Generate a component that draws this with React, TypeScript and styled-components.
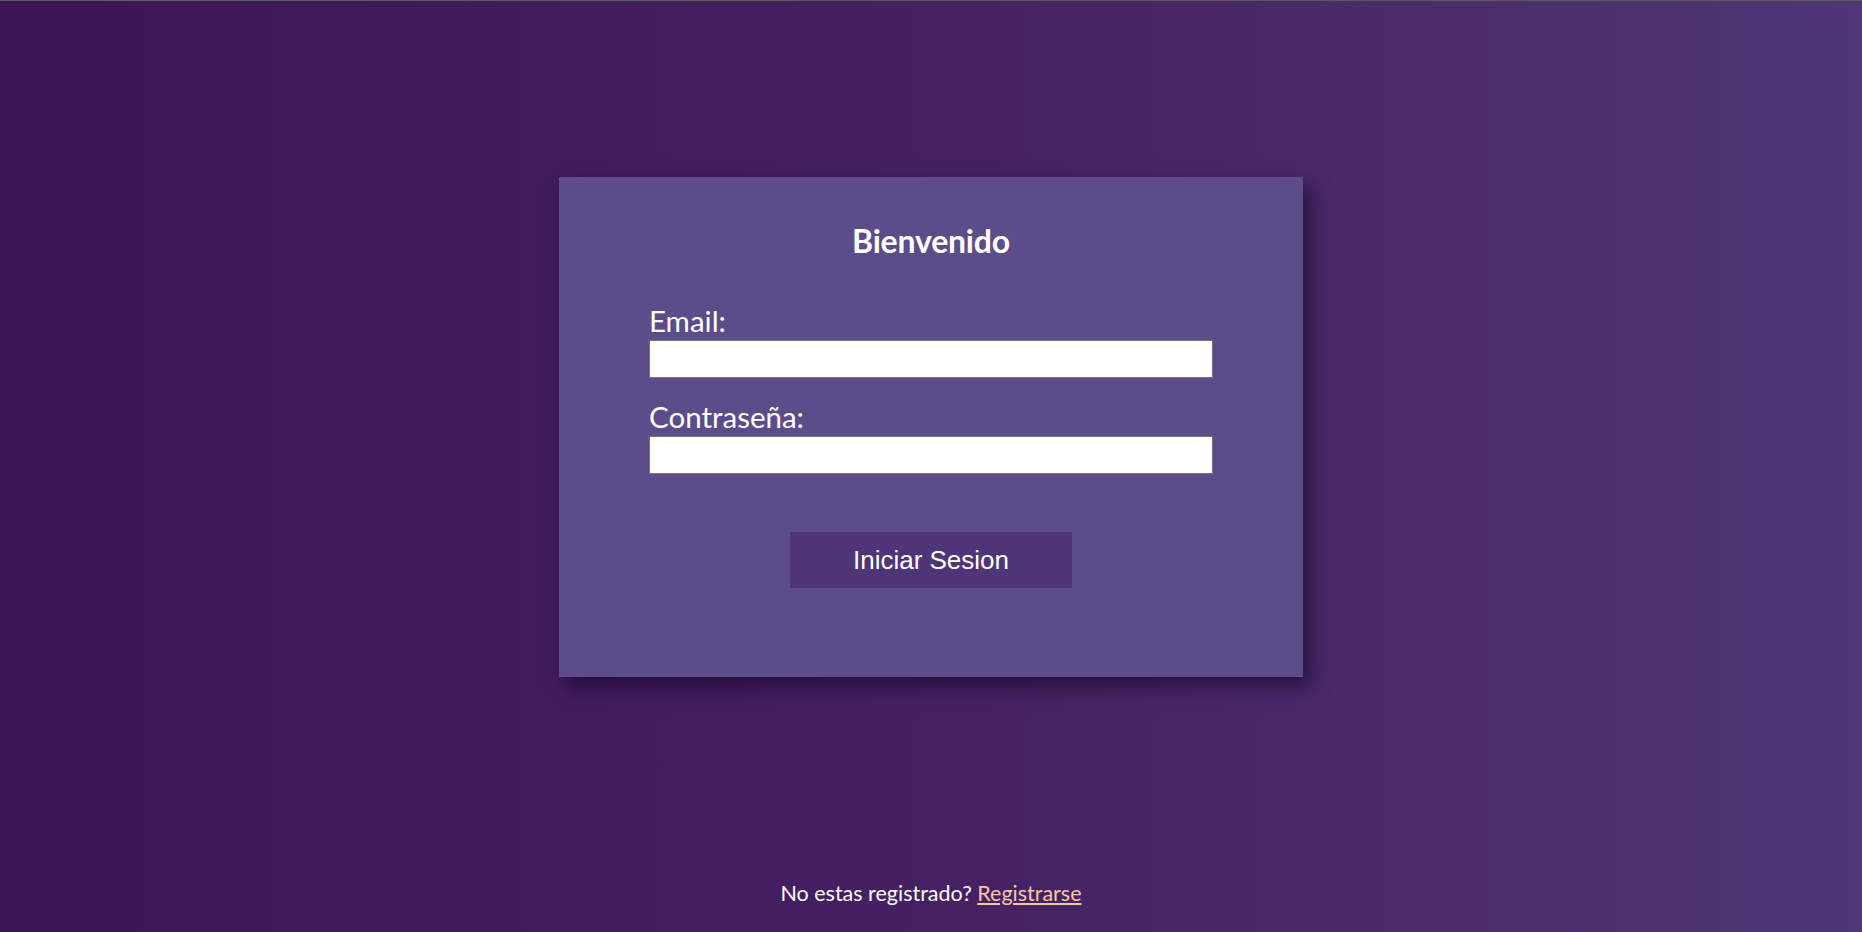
import styled, { createGlobalStyle } from "styled-components";

const GlobalStyle = createGlobalStyle`
    html, body {
        margin: 0;
        padding: 0;
    }
    body {
        font-family: Lato, "Noto Sans", sans-serif;
        color: #ffffff;
    }
`;

export const Page = styled.div`
    min-height: 100vh;
    box-sizing: border-box;
    display: flex;
    flex-direction: column;
    align-items: center;
    padding-top: 176px;
    border-top: 1px solid #5b5b5b;
    background: linear-gradient(to right, #3d1554 0%, #452062 50%, #4f3676 100%);
`;

export const Card = styled.div`
    width: 744px;
    height: 500px;
    box-sizing: border-box;
    padding-top: 45px;
    display: flex;
    flex-direction: column;
    align-items: center;
    background-color: #5c4c8a;
    box-shadow: 8px 9px 18px rgba(10, 0, 25, 0.55);
`;

export const Title = styled.h1`
    margin: 0;
    font-size: 32px;
    line-height: 37px;
    font-weight: 700;
    letter-spacing: -0.2px;
`;

export const Form = styled.form`
    width: 564px;
    margin-top: 45px;
    display: flex;
    flex-direction: column;
`;

export const Field = styled.div`
    display: flex;
    flex-direction: column;
    gap: 2px;
    & + & {
        margin-top: 22px;
    }
`;

export const Label = styled.label`
    font-size: 29.5px;
    line-height: 34px;
    font-weight: 400;
`;

export const TextBox = styled.input`
    box-sizing: border-box;
    width: 100%;
    height: 38px;
    margin: 0;
    border: 1px solid #767676;
    border-radius: 0;
    background-color: #ffffff;
    outline: none;
`;

export const SubmitButton = styled.button`
    align-self: center;
    width: 282px;
    height: 56px;
    margin-top: 58px;
    border: none;
    background-color: #4e3577;
    color: #ffffff;
    font-family: "Liberation Sans", Arial, sans-serif;
    font-size: 26px;
    cursor: pointer;
`;

export const Footer = styled.p`
    margin: auto 0 0;
    padding-bottom: 26px;
    font-size: 21.5px;
    line-height: 26px;
    color: #ffffff;
`;

export const RegisterLink = styled.a`
    color: #f5c9a0;
    text-decoration: underline;
`;

export default function App() {
    return (
        <>
            <GlobalStyle />
            <Page>
                <Card>
                    <Title>Bienvenido</Title>
                    <Form onSubmit={(e) => e.preventDefault()}>
                        <Field>
                            <Label htmlFor="email">Email:</Label>
                            <TextBox id="email" type="email" />
                        </Field>
                        <Field>
                            <Label htmlFor="password">Contraseña:</Label>
                            <TextBox id="password" type="password" />
                        </Field>
                        <SubmitButton type="submit">Iniciar Sesion</SubmitButton>
                    </Form>
                </Card>
                <Footer>
                    No estas registrado? <RegisterLink href="#">Registrarse</RegisterLink>
                </Footer>
            </Page>
        </>
    );
}
